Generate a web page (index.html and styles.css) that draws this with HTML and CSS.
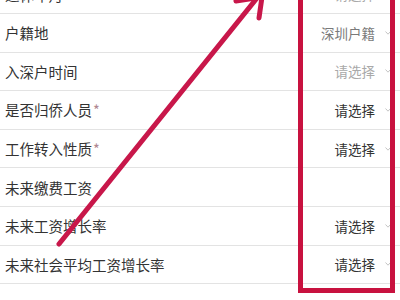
FILE: index.html
```html
<!DOCTYPE html>
<html lang="zh">
<head>
<meta charset="utf-8">
<link rel="stylesheet" href="styles.css">
</head>
<body>
<div class="page">
  <ul class="form">
    <li class="row"><span class="label">退休年月</span><span class="value muted">请选择</span><svg class="chev" width="6" height="4" viewBox="0 0 6 4"><path d="M0.5 0.5 L3 3.2 L5.5 0.5" fill="none" stroke="#c4c4c4" stroke-width="1"/></svg></li>
    <li class="row"><span class="label">户籍地</span><span class="value grey">深圳户籍</span><svg class="chev" width="6" height="4" viewBox="0 0 6 4"><path d="M0.5 0.5 L3 3.2 L5.5 0.5" fill="none" stroke="#c4c4c4" stroke-width="1"/></svg></li>
    <li class="row"><span class="label">入深户时间</span><span class="value muted">请选择</span><svg class="chev" width="6" height="4" viewBox="0 0 6 4"><path d="M0.5 0.5 L3 3.2 L5.5 0.5" fill="none" stroke="#c4c4c4" stroke-width="1"/></svg></li>
    <li class="row"><span class="label">是否归侨人员<em class="req">*</em></span><span class="value">请选择</span><svg class="chev" width="6" height="4" viewBox="0 0 6 4"><path d="M0.5 0.5 L3 3.2 L5.5 0.5" fill="none" stroke="#c4c4c4" stroke-width="1"/></svg></li>
    <li class="row"><span class="label">工作转入性质<em class="req">*</em></span><span class="value">请选择</span><svg class="chev" width="6" height="4" viewBox="0 0 6 4"><path d="M0.5 0.5 L3 3.2 L5.5 0.5" fill="none" stroke="#c4c4c4" stroke-width="1"/></svg></li>
    <li class="row"><span class="label">未来缴费工资</span></li>
    <li class="row"><span class="label">未来工资增长率</span><span class="value">请选择</span><svg class="chev" width="6" height="4" viewBox="0 0 6 4"><path d="M0.5 0.5 L3 3.2 L5.5 0.5" fill="none" stroke="#c4c4c4" stroke-width="1"/></svg></li>
    <li class="row"><span class="label">未来社会平均工资增长率</span><span class="value">请选择</span><svg class="chev" width="6" height="4" viewBox="0 0 6 4"><path d="M0.5 0.5 L3 3.2 L5.5 0.5" fill="none" stroke="#c4c4c4" stroke-width="1"/></svg></li>
  </ul>
  <div class="highlight"></div>
  <svg class="arrow" width="400" height="300" viewBox="0 0 400 300">
    <line x1="59" y1="244" x2="257" y2="-2" stroke="#c8174a" stroke-width="5" stroke-linecap="round"/>
    <polyline points="236,1 262,-3 259,18" fill="none" stroke="#c8174a" stroke-width="5" stroke-linecap="round" stroke-linejoin="round"/>
  </svg>
</div>
</body>
</html>
```

FILE: styles.css
```css
html, body {
  margin: 0;
  padding: 0;
  background: #ffffff;
}
.page {
  position: relative;
  width: 400px;
  height: 300px;
  overflow: hidden;
  font-family: "Noto Sans CJK SC", "Noto Sans", sans-serif;
}
.form {
  list-style: none;
  margin: -24.6px 0 0 0;
  padding: 0;
}
.row {
  display: flex;
  align-items: center;
  height: 37.6px;
  border-bottom: 1px solid #e3e3e3;
  padding: 0 9px 0 5px;
}
.label {
  flex: 1;
  font-size: 14.5px;
  color: #333333;
}
.req {
  font-style: normal;
  color: #b08890;
  margin-left: 1px;
}
.value {
  font-size: 13.5px;
  color: #333333;
  margin-right: 10px;
}
.value.grey {
  color: #7a7a7a;
}
.value.muted {
  color: #a9a9a9;
}
.chev {
  display: block;
}
.highlight {
  position: absolute;
  left: 298px;
  top: -10px;
  width: 87px;
  height: 293px;
  border: 5px solid #c8123f;
}
.arrow {
  position: absolute;
  left: 0;
  top: 0;
}
```
